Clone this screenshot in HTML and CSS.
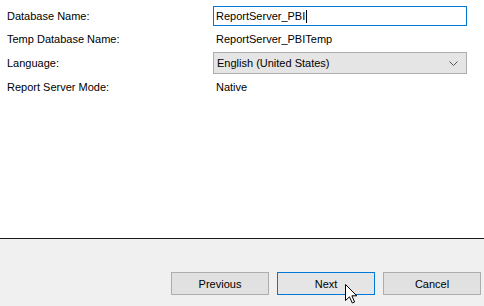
FILE: index.html
```html
<!DOCTYPE html>
<html lang="en">
<head>
    <meta charset="UTF-8">
    <title>Report Server Database</title>
    <link rel="stylesheet" href="styles.css">
</head>
<body>
    <div class="page">
        <div class="settings">
            <div class="label">Database Name:</div>
            <div class="textbox">ReportServer_PBI<span class="caret"></span></div>

            <div class="label">Temp Database Name:</div>
            <div class="value">ReportServer_PBITemp</div>

            <div class="label">Language:</div>
            <div class="dropdown">
                <span>English (United States)</span>
                <svg class="chevron" width="9" height="5" viewBox="0 0 9 5">
                    <polyline points="0.5,0.5 4.5,4.5 8.5,0.5" fill="none" stroke="#555" stroke-width="1"/>
                </svg>
            </div>

            <div class="label">Report Server Mode:</div>
            <div class="value">Native</div>
        </div>

        <div class="footer">
            <button class="btn">Previous</button>
            <button class="btn btn-default">Next</button>
            <button class="btn">Cancel</button>
        </div>

        <!-- mouse pointer over the Next button -->
        <svg class="pointer" width="13" height="20" viewBox="0 0 13 20">
            <path d="M0.5,0.5 L0.5,16.5 L4.5,12.8 L7.3,19 L9.6,18 L6.9,11.8 L11.8,11.8 Z" fill="#fff" stroke="#000" stroke-width="1" stroke-linejoin="miter"/>
        </svg>
    </div>
</body>
</html>
```

FILE: styles.css
```css
body {
    margin: 0;
    font-family: "Liberation Sans", Arial, sans-serif;
    font-size: 11px;
    color: #000;
    background: #fff;
}
.page {
    position: relative;
    width: 484px;
    height: 306px;
    display: flex;
    flex-direction: column;
}
.settings {
    height: 238px;
    box-sizing: border-box;
    padding: 6px 0 0 7px;
    display: grid;
    grid-template-columns: 206px 254px;
    grid-template-rows: 20px 18px 22px 18px;
    row-gap: 4px;
    align-items: center;
}
.value {
    padding-left: 3px;
}
.textbox {
    height: 20px;
    box-sizing: border-box;
    border: 1px solid #0078d7;
    padding: 0 2px;
    display: flex;
    align-items: center;
}
.caret {
    display: inline-block;
    width: 1px;
    height: 13px;
    background: #000;
    margin-left: 1px;
}
.dropdown {
    height: 22px;
    box-sizing: border-box;
    border: 1px solid #adadad;
    background: #e5e5e5;
    padding: 0 8px 0 3px;
    display: flex;
    align-items: center;
    justify-content: space-between;
}
.footer {
    flex: 1;
    border-top: 1px solid #1a1a1a;
    background: #f0f0f0;
    display: flex;
    justify-content: flex-end;
    align-items: flex-start;
    gap: 8px;
    padding: 33px 3px 0 0;
}
.btn {
    width: 98px;
    height: 23px;
    margin: 0;
    padding: 0;
    font-family: inherit;
    font-size: 11px;
    color: #000;
    background: #e1e1e1;
    border: 1px solid #adadad;
}
.btn-default {
    border-color: #0078d7;
    background: #e5e5e5;
}
.pointer {
    position: absolute;
    left: 345px;
    top: 284px;
}
```
